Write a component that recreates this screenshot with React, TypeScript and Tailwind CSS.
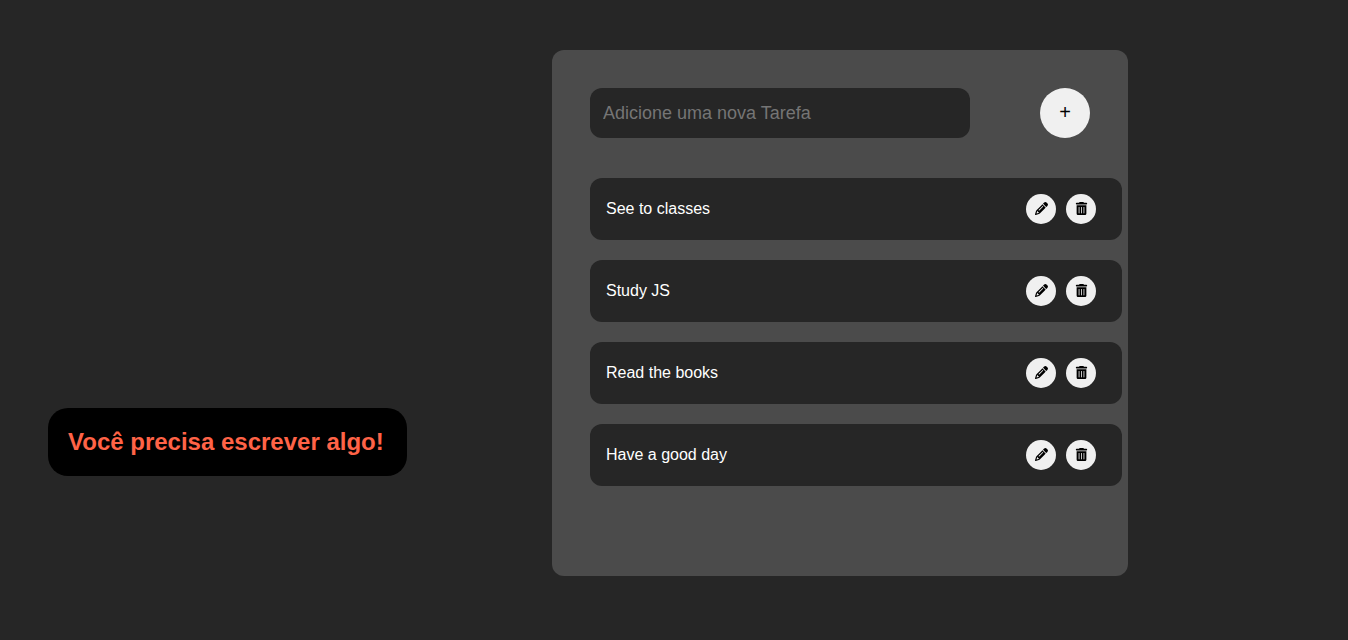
import { useState, type FormEvent } from "react";
import { FaPencil, FaTrashCan } from "react-icons/fa6";

const initialTasks = ["See to classes", "Study JS", "Read the books", "Have a good day"];

const iconButton =
  "flex size-[30px] items-center justify-center rounded-full bg-[#f0f0f0] pb-0.5 text-[13px] text-black cursor-pointer";

function TaskItem({ name, onEdit, onRemove }: { name: string; onEdit: () => void; onRemove: () => void }) {
  return (
    <li className="flex items-center justify-between rounded-xl bg-[#262626] py-4 pr-[26px] pl-4">
      <span className="text-base text-white">{name}</span>
      <div className="flex gap-2.5">
        <button type="button" aria-label={`Editar ${name}`} onClick={onEdit} className={iconButton}>
          <FaPencil />
        </button>
        <button type="button" aria-label={`Remover ${name}`} onClick={onRemove} className={iconButton}>
          <FaTrashCan />
        </button>
      </div>
    </li>
  );
}

export default function App() {
  const [tasks, setTasks] = useState(initialTasks);
  const [text, setText] = useState("");
  const [showAlert, setShowAlert] = useState(true);

  function addTask(event: FormEvent) {
    event.preventDefault();
    const value = text.trim();
    setShowAlert(!value);
    if (value) {
      setTasks([...tasks, value]);
      setText("");
    }
  }

  function removeTask(index: number) {
    setTasks(tasks.filter((_, i) => i !== index));
  }

  function editTask(index: number) {
    setText(tasks[index]);
    removeTask(index);
  }

  return (
    <main className="flex min-h-screen items-start bg-[#262626] px-12 pt-[50px] pb-16 font-['Liberation_Sans',Arial,sans-serif]">
      <div className="flex w-full items-end gap-[145px]">
        <div
          role="alert"
          className={`mb-[100px] w-[359px] shrink-0 rounded-[20px] bg-black px-5 py-4 ${showAlert ? "" : "invisible"}`}
        >
          <p className="text-2xl leading-9 font-bold whitespace-nowrap text-[#ff6347]">Você precisa escrever algo!</p>
        </div>

        <section className="max-w-xl flex-1 rounded-xl bg-[#4b4b4b] pt-[38px] pr-1.5 pb-[90px] pl-[38px]">
          <form onSubmit={addTask} className="flex items-center justify-between gap-4 pr-8">
            <input
              type="text"
              aria-label="Nova tarefa"
              placeholder="Adicione uma nova Tarefa"
              value={text}
              onChange={(event) => setText(event.target.value)}
              className="h-[50px] w-[380px] min-w-0 rounded-xl bg-[#262626] px-[13px] text-lg text-white outline-none placeholder:text-[#757575]"
            />
            <button
              type="submit"
              aria-label="Adicionar tarefa"
              className="flex size-[50px] shrink-0 cursor-pointer items-center justify-center rounded-full bg-[#f0f0f0] pb-0.5 text-xl text-black"
            >
              +
            </button>
          </form>

          <ul className="mt-10 flex flex-col gap-5">
            {tasks.map((task, index) => (
              <TaskItem
                key={`${task}-${index}`}
                name={task}
                onEdit={() => editTask(index)}
                onRemove={() => removeTask(index)}
              />
            ))}
          </ul>
        </section>
      </div>
    </main>
  );
}
